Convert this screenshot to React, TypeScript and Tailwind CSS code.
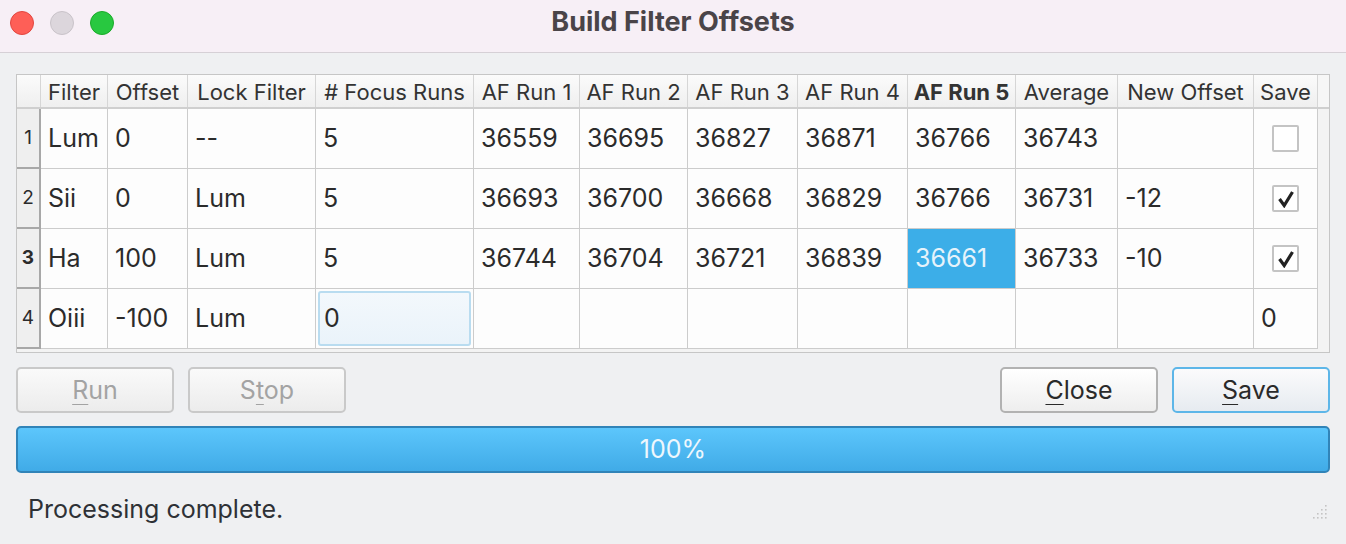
import React from 'react';

const cols = [
  { label: '', w: 'w-[24px]' },
  { label: 'Filter', w: 'w-[67px]' },
  { label: 'Offset', w: 'w-[80px]' },
  { label: 'Lock Filter', w: 'w-[128px]' },
  { label: '# Focus Runs', w: 'w-[158px]' },
  { label: 'AF Run 1', w: 'w-[106px]' },
  { label: 'AF Run 2', w: 'w-[108px]' },
  { label: 'AF Run 3', w: 'w-[110px]' },
  { label: 'AF Run 4', w: 'w-[110px]' },
  { label: 'AF Run 5', w: 'w-[108px]' },
  { label: 'Average', w: 'w-[102px]' },
  { label: 'New Offset', w: 'w-[136px]' },
  { label: 'Save', w: 'w-[64px]' },
];

type Row = { cells: string[]; save: 'off' | 'on' | '0' };

const rows: Row[] = [
  { cells: ['Lum', '0', '--', '5', '36559', '36695', '36827', '36871', '36766', '36743', ''], save: 'off' },
  { cells: ['Sii', '0', 'Lum', '5', '36693', '36700', '36668', '36829', '36766', '36731', '-12'], save: 'on' },
  { cells: ['Ha', '100', 'Lum', '5', '36744', '36704', '36721', '36839', '36661', '36733', '-10'], save: 'on' },
  { cells: ['Oiii', '-100', 'Lum', '0', '', '', '', '', '', '', ''], save: '0' },
];

const CheckBox: React.FC<{ checked: boolean }> = ({ checked }) => (
  <div className="w-[27px] h-[27px] border-2 border-[#c4c4c4] rounded-[2px] bg-white flex items-center justify-center">
    {checked && (
      <svg width="18" height="18" viewBox="0 0 18 18">
        <path d="M2.5 9 L7.2 15.5 L15.5 2" fill="none" stroke="#222" strokeWidth="3.2" strokeLinejoin="miter" />
      </svg>
    )}
  </div>
);

const Btn: React.FC<{ pre?: string; u: string; post: string; kind: 'disabled' | 'normal' | 'default' }> = ({ pre = '', u, post, kind }) => {
  const cls =
    kind === 'disabled'
      ? 'border-[#c9c9c9] text-[#a3a3a3] bg-gradient-to-b from-[#fafafa] to-[#ececec]'
      : kind === 'default'
      ? 'border-[#5db6e8] text-[#2a2a2a] bg-gradient-to-b from-[#fbfbfc] to-[#e6ebf0]'
      : 'border-[#b2b2b2] text-[#2a2a2a] bg-gradient-to-b from-[#ffffff] to-[#eeeeee]';
  return (
    <div className={`w-[158px] h-[46px] border-2 rounded-[5px] flex items-center justify-center pt-[2px] text-[25px] ${cls}`}>
      <span>
        {pre}
        <span className="underline underline-offset-[5px] decoration-1">{u}</span>
        {post}
      </span>
    </div>
  );
};

export default function App() {
  return (
    <div className="w-[1346px] h-[544px] bg-[#eff0f2] flex flex-col font-['Inter',sans-serif] text-[#2b2b2b] overflow-hidden">
      {/* title bar */}
      <div className="h-[53px] shrink-0 bg-[#f7eff6] border-b border-[#d6d0d6] flex items-center relative">
        <div className="flex gap-[16px] pl-[10px] pb-[6px]">
          <div className="w-[24px] h-[24px] rounded-full bg-[#fe5f57] border border-[#e2463f]" />
          <div className="w-[24px] h-[24px] rounded-full bg-[#dcd6dc] border border-[#c9c3c9]" />
          <div className="w-[24px] h-[24px] rounded-full bg-[#28c840] border border-[#1aab29]" />
        </div>
        <div className="absolute left-0 right-0 top-0 h-[45px] flex items-center justify-center text-[27px] font-bold text-[#4a4448] pointer-events-none">
          Build Filter Offsets
        </div>
      </div>

      <div className="flex flex-col px-[16px] pt-[21px] shrink-0">
        {/* table */}
        <div className="border border-[#c6c6c6] bg-[#f3f3f3] h-[279px] flex flex-col">
          <div className="flex h-[34px] shrink-0 bg-[#f6f6f6] border-b-2 border-[#cfcfcf]">
            {cols.map((c, i) => (
              <div
                key={i}
                className={`${c.w} shrink-0 flex items-center justify-center pt-[3px] text-[22px] text-[#333] border-r border-[#d6d6d6] bg-gradient-to-b from-[#fbfbfb] to-[#efefef] ${c.label === 'AF Run 5' ? 'font-bold' : ''}`}
              >
                {c.label}
              </div>
            ))}
          </div>
          {rows.map((r, ri) => (
            <div key={ri} className="flex h-[60px] shrink-0">
              <div className={`w-[24px] shrink-0 bg-[#efefef] border-r-2 border-b-2 border-[#a8a8a8] flex items-center justify-center text-[19px] ${ri === 2 ? 'font-bold' : ''}`}>
                {ri + 1}
              </div>
              {r.cells.map((v, ci) => {
                const selected = ri === 2 && ci === 8;
                const focused = ri === 3 && ci === 3;
                return (
                  <div
                    key={ci}
                    className={`${cols[ci + 1].w} shrink-0 border-r border-b border-[#cccccc] flex items-center text-[25px] ${
                      selected ? 'bg-[#3caee8] text-[#e6f3fb] pl-[7px]' : 'bg-[#fdfdfd]'
                    } ${focused ? 'p-[2px]' : selected ? '' : 'pl-[7px]'}`}
                  >
                    {focused ? (
                      <div className="w-full h-full border-2 border-[#b9dcf0] rounded-[3px] bg-gradient-to-b from-[#f3f8fc] to-[#eaf3fa] flex items-center pl-[4px]">
                        {v}
                      </div>
                    ) : (
                      v
                    )}
                  </div>
                );
              })}
              <div className="w-[64px] shrink-0 border-r border-b border-[#cccccc] bg-[#fdfdfd] flex items-center text-[25px]">
                {r.save === '0' ? (
                  <span className="pl-[7px]">0</span>
                ) : (
                  <div className="w-full flex justify-center">
                    <CheckBox checked={r.save === 'on'} />
                  </div>
                )}
              </div>
            </div>
          ))}
        </div>

        {/* buttons */}
        <div className="flex mt-[14px] gap-[14px]">
          <Btn u="R" post="un" kind="disabled" />
          <Btn pre="S" u="t" post="op" kind="disabled" />
          <div className="flex-1" />
          <Btn u="C" post="lose" kind="normal" />
          <Btn u="S" post="ave" kind="default" />
        </div>

        {/* progress */}
        <div className="mt-[13px] h-[47px] rounded-[5px] border-2 border-[#3184b8] bg-gradient-to-b from-[#5cc6fc] to-[#40abe7] flex items-center justify-center text-[25px] text-[#eef7fd]">
          100%
        </div>

        {/* status */}
        <div className="flex items-center h-[74px] pl-[12px] text-[25px] text-[#2e3136] relative">
          Processing complete.
          <svg className="absolute right-[2px] top-[29px]" width="22" height="22" viewBox="0 0 22 22">
            {[
              [19, 3], [19, 7], [15, 7], [19, 11], [15, 11], [11, 11], [19, 15], [15, 15], [11, 15], [7, 15],
            ].map(([x, y], i) => (
              <rect key={i} x={x} y={y} width="1.6" height="1.6" fill="#c4c4c4" />
            ))}
          </svg>
        </div>
      </div>
    </div>
  );
}
